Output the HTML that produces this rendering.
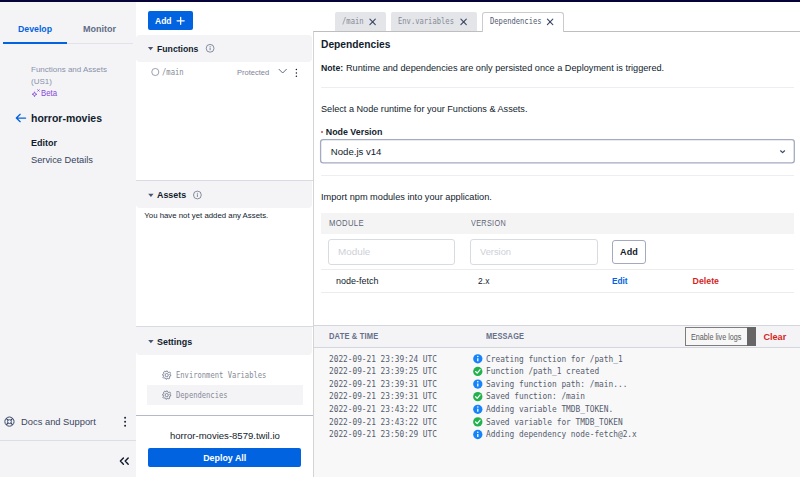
<!DOCTYPE html>
<html lang="en"><head><meta charset="utf-8"><title>Functions and Assets - horror-movies</title>
<style>
*{box-sizing:border-box;margin:0;padding:0}
html,body{width:800px;height:477px;overflow:hidden;background:#fff}
body{font-family:"Liberation Sans",sans-serif;color:#121c2d;position:relative;font-size:10px}
.a{position:absolute;white-space:nowrap;line-height:1}
svg{position:absolute;overflow:visible}

</style></head><body>
<div class="a" style="left:0;top:0;width:800px;height:2px;background:#06033a"></div>
<!-- sidebar -->
<div class="a" style="left:0;top:2px;width:136px;height:475px;background:#f4f4f6"></div>
<div class="a" style="left:3px;top:43px;width:130px;height:1px;background:#e1e3ea"></div>
<div class="a" style="left:3px;top:42px;width:64px;height:2px;background:#0263e0"></div>
<div class="a" style="left:0;top:440px;width:136px;height:1px;background:#dcdee5"></div>
<!-- mid panel -->
<div class="a" style="left:148px;top:11px;width:45px;height:19px;background:#0263e0;border-radius:2px"></div>
<div class="a" style="left:136px;top:34.5px;width:175.5px;height:27px;background:#f4f4f6;border-radius:4px"></div>
<div class="a" style="left:136px;top:180px;width:177px;height:1px;background:#d9dbe3"></div>
<div class="a" style="left:136px;top:181px;width:176px;height:27px;background:#f4f4f6;border-radius:0 0 4px 4px"></div>
<div class="a" style="left:136px;top:326px;width:177px;height:1px;background:#d9dbe3"></div>
<div class="a" style="left:136px;top:327px;width:176px;height:28px;background:#f4f4f6;border-radius:0 0 4px 4px"></div>
<div class="a" style="left:147px;top:385px;width:156px;height:20px;background:#f4f4f6"></div>
<div class="a" style="left:136px;top:415px;width:177px;height:1px;background:#b4b8c8"></div>
<div class="a" style="left:148px;top:448px;width:153px;height:19px;background:#0263e0;border-radius:2px"></div>
<!-- tabs -->
<div class="a" style="left:335px;top:12px;width:50.5px;height:19px;background:#e3e5e9;border-radius:2px 2px 0 0"></div>
<div class="a" style="left:391px;top:12px;width:86px;height:19px;background:#e3e5e9;border-radius:2px 2px 0 0"></div>
<!-- content panel -->
<div class="a" style="left:313px;top:31px;width:490px;height:450px;background:#fff;border:1px solid #d4d4d4;border-top-color:#bebebe"></div>
<div class="a" style="left:482px;top:12px;width:82px;height:20px;background:#fff;border:1px solid #cbcbcb;border-bottom:0;border-radius:3px 3px 0 0"></div>
<div class="a" style="left:321px;top:87px;width:473px;height:1px;background:#edeef2"></div>
<div class="a" style="left:320.8px;top:130.6px;width:2px;height:2px;border-radius:1px;background:#e0454a"></div>

<div class="a" style="left:321px;top:175px;width:473px;height:1px;background:#edeef2"></div>
<div class="a" style="left:321px;top:213px;width:473px;height:20.5px;background:#f4f4f4"></div>
<div class="a" style="left:328px;top:239px;width:127px;height:25.5px;background:#fff;border:1px solid #d9dbe2;border-radius:3px"></div>
<div class="a" style="left:470px;top:239px;width:127.5px;height:25.5px;background:#fff;border:1px solid #d9dbe2;border-radius:3px"></div>
<div class="a" style="left:612px;top:240px;width:34px;height:23.5px;background:#fff;border:1px solid #a3a9be;border-radius:3px"></div>
<div class="a" style="left:321px;top:269px;width:473px;height:1px;background:#ececef"></div>
<div class="a" style="left:321px;top:292px;width:473px;height:1px;background:#ececef"></div>
<!-- log panel -->
<div class="a" style="left:314px;top:325px;width:486px;height:152px;background:#f4f4f6;border-top:1px solid #d4d6de"></div>
<div class="a" style="left:314px;top:348px;width:486px;height:129px;background:#f8f8f9"></div>
<div class="a" style="left:314px;top:347px;width:486px;height:1px;background:#d4d6de"></div>
<div class="a" style="left:685px;top:327px;width:71px;height:18.5px;background:#f7f7f7;border:1px solid #7d7d7d"></div>
<div class="a" style="left:747px;top:327px;width:9px;height:18.5px;background:#666"></div>
<!-- icons -->
<svg style="left:0;top:0" width="800" height="477" viewBox="0 0 800 477" fill="none">
 <!-- beta sparkle -->
 <path d="M34.5 91.8 L35.15 93.6 L36.95 94.25 L35.15 94.9 L34.5 96.7 L33.85 94.9 L32.05 94.25 L33.85 93.6 Z" stroke="#8548d6" stroke-width="0.8" stroke-linejoin="round"/>
 <path d="M37.4 89.4 L39.5 91.5 M39.5 89.4 L37.4 91.5" stroke="#8548d6" stroke-width="0.8"/>
 <!-- back arrow -->
 <path d="M25.6 118 H16.4 M20.2 114.3 L16.3 118 L20.2 121.7" stroke="#0263e0" stroke-width="1.25" stroke-linecap="round" stroke-linejoin="round"/>
 <!-- docs lifebuoy -->
 <g stroke="#3b4a6b">
  <circle cx="9.45" cy="421.6" r="4.6" stroke-width="1"/><circle cx="9.45" cy="421.6" r="1.9" stroke-width="0.9"/>
  <path d="M6.2 418.35 L8.1 420.25 M12.7 418.35 L10.8 420.25 M6.2 424.85 L8.1 422.95 M12.7 424.85 L10.8 422.95" stroke-width="1.3"/>
 </g>
 <!-- sidebar dots -->
 <g fill="#121c2d"><circle cx="125.1" cy="417.7" r="0.95"/><circle cx="125.1" cy="421.7" r="0.95"/><circle cx="125.1" cy="425.7" r="0.95"/></g>
 <!-- collapse -->
 <path d="M123.4 458 L120.4 461.1 L123.4 464.2 M128.2 458 L125.2 461.1 L128.2 464.2" stroke="#121c2d" stroke-width="1.45" stroke-linecap="round" stroke-linejoin="round"/>
 <!-- add plus -->
 <path d="M177.1 20.8 H184.2 M180.65 17.3 V24.3" stroke="#fff" stroke-width="1.3" stroke-linecap="round"/>
 <!-- carets -->
 <g fill="#4b5671">
  <path d="M147.9 47.1 H153.3 L150.6 50.3 Z"/>
  <path d="M148.2 193.7 H153.6 L150.9 196.9 Z"/>
  <path d="M148.2 340 H153.6 L150.9 343.2 Z"/>
 </g>
 <!-- info icons -->
 <g stroke="#606b85" stroke-width="0.75">
  <circle cx="210.1" cy="48.3" r="3.9"/><path d="M210.1 47.6 V50.2" stroke-width="0.8"/><circle cx="210.1" cy="46.5" r="0.3" fill="#606b85" stroke-width="0.4"/>
  <circle cx="197.4" cy="195" r="3.9"/><path d="M197.4 194.3 V196.9" stroke-width="0.8"/><circle cx="197.4" cy="193.2" r="0.3" fill="#606b85" stroke-width="0.4"/>
 </g>
 <!-- radio -->
 <circle cx="155.3" cy="72" r="3.55" stroke="#8a8fa0" stroke-width="0.85"/>
 <!-- chevron -->
 <path d="M279 69.3 L282.7 73 L286.4 69.3" stroke="#565f7a" stroke-width="0.95" stroke-linecap="round" stroke-linejoin="round"/>
 <g fill="#121c2d"><circle cx="296.4" cy="69.6" r="0.75"/><circle cx="296.4" cy="72.9" r="0.75"/><circle cx="296.4" cy="76.2" r="0.75"/></g>
 <!-- gears -->
 <g stroke="#6b7389" stroke-width="0.95" stroke-linejoin="round">
  <path transform="translate(166.7 375.1) scale(0.88)" d="M-0.9 -4.5 H0.9 L1.3 -3.3 L2.2 -2.9 L3.3 -3.5 L4.5 -2.2 L3.5 -1.3 L3.6 -0.6 L4.6 -0.2 V0.9 L3.5 1.3 L3.1 2.2 L3.6 3.3 L2.3 4.5 L1.3 3.4 L0.6 3.6 L0.2 4.6 H-0.9 L-1.3 3.5 L-2.2 3.1 L-3.3 3.6 L-4.5 2.3 L-3.4 1.3 L-3.6 0.6 L-4.6 0.2 V-0.9 L-3.5 -1.3 L-3.1 -2.2 L-3.6 -3.3 L-2.3 -4.5 L-1.3 -3.4 Z"/>
  <circle cx="166.7" cy="375.1" r="1.6" stroke-width="0.8"/>
  <path transform="translate(166.7 395.1) scale(0.88)" d="M-0.9 -4.5 H0.9 L1.3 -3.3 L2.2 -2.9 L3.3 -3.5 L4.5 -2.2 L3.5 -1.3 L3.6 -0.6 L4.6 -0.2 V0.9 L3.5 1.3 L3.1 2.2 L3.6 3.3 L2.3 4.5 L1.3 3.4 L0.6 3.6 L0.2 4.6 H-0.9 L-1.3 3.5 L-2.2 3.1 L-3.3 3.6 L-4.5 2.3 L-3.4 1.3 L-3.6 0.6 L-4.6 0.2 V-0.9 L-3.5 -1.3 L-3.1 -2.2 L-3.6 -3.3 L-2.3 -4.5 L-1.3 -3.4 Z"/>
  <circle cx="166.7" cy="395.1" r="1.6" stroke-width="0.8"/>
 </g>
 <!-- tab close X -->
 <g stroke="#3d4966" stroke-width="1.15" stroke-linecap="round">
  <path d="M369.90 19.20 L375.30 24.60 M375.30 19.20 L369.90 24.60"/>
  <path d="M460.90 19.20 L466.30 24.60 M466.30 19.20 L460.90 24.60"/>
  <path d="M547.40 19.20 L552.80 24.60 M552.80 19.20 L547.40 24.60"/>
 </g>
 <!-- select -->
 <rect x="320.6" y="139.65" width="473.7" height="23.3" rx="2.6" fill="#fff" stroke="#a4aac0" stroke-width="1.3"/>
 <path d="M780.6 150.8 L782.6 152.6 L784.6 150.8" stroke="#394762" stroke-width="1.2" stroke-linecap="round" stroke-linejoin="round"/>
</svg>
<svg style="left:0;top:0" width="800" height="477" viewBox="0 0 800 477" fill="none">
 <circle cx="477.8" cy="358.80" r="4.65" fill="#1683fb"/><path d="M477.8 358.20 V361.30" stroke="#fff" stroke-width="1.3"/><circle cx="477.8" cy="356.50" r="0.8" fill="#fff"/>
 <circle cx="477.8" cy="371.42" r="4.65" fill="#23b14d"/><path d="M475.6 371.52 L477.2 373.12 L480.1 369.72" stroke="#fff" stroke-width="1.2" stroke-linecap="round" stroke-linejoin="round"/>
 <circle cx="477.8" cy="384.04" r="4.65" fill="#1683fb"/><path d="M477.8 383.44 V386.54" stroke="#fff" stroke-width="1.3"/><circle cx="477.8" cy="381.74" r="0.8" fill="#fff"/>
 <circle cx="477.8" cy="396.66" r="4.65" fill="#23b14d"/><path d="M475.6 396.76 L477.2 398.36 L480.1 394.96" stroke="#fff" stroke-width="1.2" stroke-linecap="round" stroke-linejoin="round"/>
 <circle cx="477.8" cy="409.28" r="4.65" fill="#1683fb"/><path d="M477.8 408.68 V411.78" stroke="#fff" stroke-width="1.3"/><circle cx="477.8" cy="406.98" r="0.8" fill="#fff"/>
 <circle cx="477.8" cy="421.90" r="4.65" fill="#23b14d"/><path d="M475.6 422.00 L477.2 423.60 L480.1 420.20" stroke="#fff" stroke-width="1.2" stroke-linecap="round" stroke-linejoin="round"/>
 <circle cx="477.8" cy="434.52" r="4.65" fill="#1683fb"/><path d="M477.8 433.92 V437.02" stroke="#fff" stroke-width="1.3"/><circle cx="477.8" cy="432.22" r="0.8" fill="#fff"/>
</svg>

<div class="a" style="left:18px;top:24.93px;font-size:8.74px;color:#0263e0;font-weight:bold">Develop</div>
<div class="a" style="left:83px;top:24.80px;font-size:9.0px;color:#606b85;font-weight:bold">Monitor</div>
<div class="a" style="left:31px;top:66.29px;font-size:8.0px;color:#8891aa">Functions and Assets</div>
<div class="a" style="left:31px;top:78.29px;font-size:8px;color:#8891aa">(US1)</div>
<div class="a" style="left:41.2px;top:89.05px;font-size:8.3px;color:#8548d6;transform:scaleX(0.937);transform-origin:0 0">Beta</div>
<div class="a" style="left:31px;top:113.59px;font-size:10.47px;color:#121c2d;font-weight:bold">horror-movies</div>
<div class="a" style="left:31px;top:138.80px;font-size:9.0px;color:#121c2d;font-weight:bold">Editor</div>
<div class="a" style="left:31px;top:156.16px;font-size:9.3px;color:#36425d">Service Details</div>
<div class="a" style="left:21.1px;top:417.74px;font-size:9.34px;color:#3b4660">Docs and Support</div>
<div class="a" style="left:155px;top:17.05px;font-size:8.49px;color:#fff;font-weight:bold">Add</div>
<div class="a" style="left:157px;top:44.95px;font-size:8.69px;color:#121c2d;font-weight:bold">Functions</div>
<div class="a" style="left:162.4px;top:67.95px;font-size:8.2px;color:#868a96;font-family:'DejaVu Sans Mono','Liberation Mono',monospace;transform:scaleX(0.875);transform-origin:0 0">/main</div>
<div class="a" style="left:236.8px;top:68.94px;font-size:8px;color:#7d8397;transform:scaleX(0.940);transform-origin:0 0">Protected</div>
<div class="a" style="left:157px;top:191.35px;font-size:8.9px;color:#121c2d;font-weight:bold">Assets</div>
<div class="a" style="left:144.3px;top:212.18px;font-size:7.82px;color:#121c2d">You have not yet added any Assets.</div>
<div class="a" style="left:157px;top:337.84px;font-size:8.92px;color:#121c2d;font-weight:bold">Settings</div>
<div class="a" style="left:176.2px;top:370.65px;font-size:8.2px;color:#868a96;font-family:'DejaVu Sans Mono','Liberation Mono',monospace;transform:scaleX(0.873);transform-origin:0 0">Environment Variables</div>
<div class="a" style="left:176.2px;top:390.75px;font-size:8.2px;color:#868a96;font-family:'DejaVu Sans Mono','Liberation Mono',monospace;transform:scaleX(0.871);transform-origin:0 0">Dependencies</div>
<div class="a" style="left:170px;top:431.43px;font-size:9.56px;color:#121c2d">horror-movies-8579.twil.io</div>
<div class="a" style="left:203.2px;top:453.95px;font-size:8.9px;color:#fff;font-weight:bold">Deploy All</div>
<div class="a" style="left:342.4px;top:16.70px;font-size:8.2px;color:#868a96;font-family:'DejaVu Sans Mono','Liberation Mono',monospace;transform:scaleX(0.875);transform-origin:0 0">/main</div>
<div class="a" style="left:398.3px;top:16.70px;font-size:8.2px;color:#868a96;font-family:'DejaVu Sans Mono','Liberation Mono',monospace;transform:scaleX(0.873);transform-origin:0 0">Env.variables</div>
<div class="a" style="left:489.5px;top:16.70px;font-size:8.2px;color:#525a72;font-family:'DejaVu Sans Mono','Liberation Mono',monospace;transform:scaleX(0.871);transform-origin:0 0">Dependencies</div>
<div class="a" style="left:321px;top:40.29px;font-size:10.25px;color:#121c2d;font-weight:bold">Dependencies</div>
<div class="a" style="left:321px;top:63.95px;font-size:8.69px;color:#121c2d;font-weight:bold">Note:</div>
<div class="a" style="left:346px;top:63.73px;font-size:9.16px;color:#121c2d">Runtime and dependencies are only persisted once a Deployment is triggered.</div>
<div class="a" style="left:321px;top:104.83px;font-size:9.15px;color:#121c2d">Select a Node runtime for your Functions &amp; Assets.</div>
<div class="a" style="left:325.8px;top:128.27px;font-size:8.86px;color:#121c2d;font-weight:bold">Node Version</div>
<div class="a" style="left:330.8px;top:146.61px;font-size:9.6px;color:#121c2d">Node.js v14</div>
<div class="a" style="left:321px;top:192.50px;font-size:9.21px;color:#121c2d">Import npm modules into your application.</div>
<div class="a" style="left:328.6px;top:219.05px;font-size:8.7px;color:#5f6577;letter-spacing:0.4px;transform:scaleX(0.882);transform-origin:0 0">MODULE</div>
<div class="a" style="left:470.6px;top:219.05px;font-size:8.7px;color:#5f6577;letter-spacing:0.4px;transform:scaleX(0.835);transform-origin:0 0">VERSION</div>
<div class="a" style="left:337.6px;top:246.76px;font-size:9.7px;color:#cdd0d8;transform:scaleX(1.018);transform-origin:0 0">Module</div>
<div class="a" style="left:480.4px;top:246.76px;font-size:9.7px;color:#cdd0d8;transform:scaleX(0.958);transform-origin:0 0">Version</div>
<div class="a" style="left:620.1px;top:248.08px;font-size:9.05px;color:#121c2d;font-weight:bold">Add</div>
<div class="a" style="left:336px;top:276.92px;font-size:8.97px;color:#121c2d">node-fetch</div>
<div class="a" style="left:478.1px;top:277.16px;font-size:8.47px;color:#121c2d">2.x</div>
<div class="a" style="left:612.0px;top:277.20px;font-size:8.8px;color:#0263e0;font-weight:bold;transform:scaleX(0.939);transform-origin:0 0">Edit</div>
<div class="a" style="left:692.6px;top:277.20px;font-size:8.8px;color:#d61f1f;font-weight:bold">Delete</div>
<div class="a" style="left:328.8px;top:332.10px;font-size:9px;color:#67708a;font-weight:bold;letter-spacing:0.2px;transform:scaleX(0.836);transform-origin:0 0">DATE &amp; TIME</div>
<div class="a" style="left:485.9px;top:332.10px;font-size:9px;color:#67708a;font-weight:bold;letter-spacing:0.2px;transform:scaleX(0.822);transform-origin:0 0">MESSAGE</div>
<div class="a" style="left:691px;top:333.25px;font-size:8.5px;color:#5a5a5a;transform:scaleX(0.847);transform-origin:0 0">Enable live logs</div>
<div class="a" style="left:763.5px;top:332.67px;font-size:9.07px;color:#d61f1f;font-weight:bold">Clear</div>
<div class="a" style="left:328.8px;top:354.60px;font-size:8.2px;color:#555c6d;font-family:'DejaVu Sans Mono','Liberation Mono',monospace;transform:scaleX(0.952);transform-origin:0 0">2022-09-21 23:39:24 UTC</div>
<div class="a" style="left:485.7px;top:354.60px;font-size:8.2px;color:#555c6d;font-family:'DejaVu Sans Mono','Liberation Mono',monospace;transform:scaleX(0.956);transform-origin:0 0">Creating function for /path_1</div>
<div class="a" style="left:328.8px;top:367.22px;font-size:8.2px;color:#555c6d;font-family:'DejaVu Sans Mono','Liberation Mono',monospace;transform:scaleX(0.952);transform-origin:0 0">2022-09-21 23:39:25 UTC</div>
<div class="a" style="left:485.7px;top:367.22px;font-size:8.2px;color:#555c6d;font-family:'DejaVu Sans Mono','Liberation Mono',monospace;transform:scaleX(0.956);transform-origin:0 0">Function /path_1 created</div>
<div class="a" style="left:328.8px;top:379.84px;font-size:8.2px;color:#555c6d;font-family:'DejaVu Sans Mono','Liberation Mono',monospace;transform:scaleX(0.952);transform-origin:0 0">2022-09-21 23:39:31 UTC</div>
<div class="a" style="left:485.7px;top:379.84px;font-size:8.2px;color:#555c6d;font-family:'DejaVu Sans Mono','Liberation Mono',monospace;transform:scaleX(0.956);transform-origin:0 0">Saving function path: /main...</div>
<div class="a" style="left:328.8px;top:392.46px;font-size:8.2px;color:#555c6d;font-family:'DejaVu Sans Mono','Liberation Mono',monospace;transform:scaleX(0.952);transform-origin:0 0">2022-09-21 23:39:31 UTC</div>
<div class="a" style="left:485.7px;top:392.46px;font-size:8.2px;color:#555c6d;font-family:'DejaVu Sans Mono','Liberation Mono',monospace;transform:scaleX(0.956);transform-origin:0 0">Saved function: /main</div>
<div class="a" style="left:328.8px;top:405.08px;font-size:8.2px;color:#555c6d;font-family:'DejaVu Sans Mono','Liberation Mono',monospace;transform:scaleX(0.952);transform-origin:0 0">2022-09-21 23:43:22 UTC</div>
<div class="a" style="left:485.7px;top:405.08px;font-size:8.2px;color:#555c6d;font-family:'DejaVu Sans Mono','Liberation Mono',monospace;transform:scaleX(0.956);transform-origin:0 0">Adding variable TMDB_TOKEN.</div>
<div class="a" style="left:328.8px;top:417.70px;font-size:8.2px;color:#555c6d;font-family:'DejaVu Sans Mono','Liberation Mono',monospace;transform:scaleX(0.952);transform-origin:0 0">2022-09-21 23:43:22 UTC</div>
<div class="a" style="left:485.7px;top:417.70px;font-size:8.2px;color:#555c6d;font-family:'DejaVu Sans Mono','Liberation Mono',monospace;transform:scaleX(0.956);transform-origin:0 0">Saved variable for TMDB_TOKEN</div>
<div class="a" style="left:328.8px;top:430.32px;font-size:8.2px;color:#555c6d;font-family:'DejaVu Sans Mono','Liberation Mono',monospace;transform:scaleX(0.952);transform-origin:0 0">2022-09-21 23:50:29 UTC</div>
<div class="a" style="left:485.7px;top:430.32px;font-size:8.2px;color:#555c6d;font-family:'DejaVu Sans Mono','Liberation Mono',monospace;transform:scaleX(0.956);transform-origin:0 0">Adding dependency node-fetch@2.x</div>
</body></html>
